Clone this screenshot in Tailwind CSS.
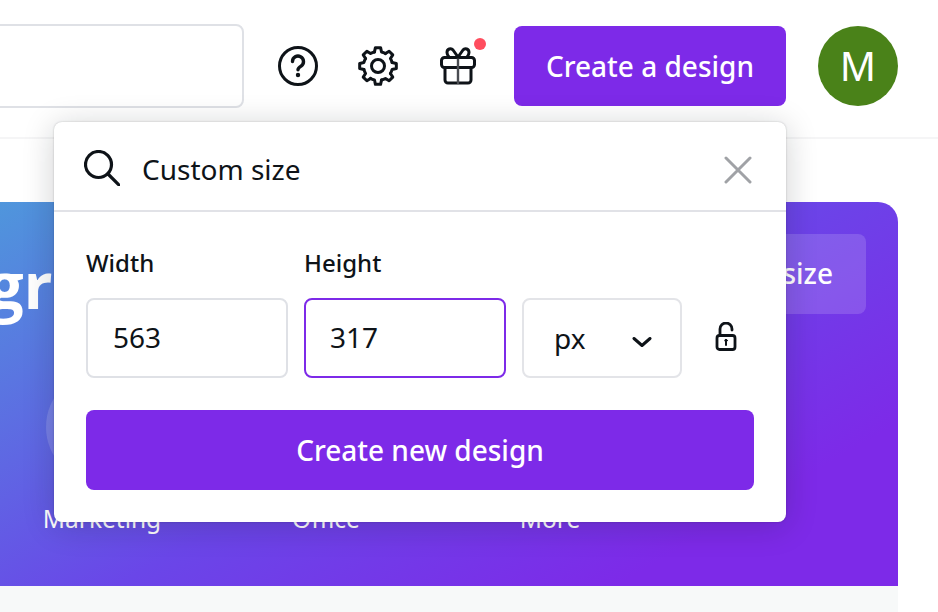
<!DOCTYPE html>
<html lang="en">
<head>
    <meta charset="UTF-8">
    <title>Custom size</title>
    <script src="https://cdn.jsdelivr.net/npm/@tailwindcss/browser@4"></script>
</head>
<body class="bg-white">
    <div class="relative w-[938px] h-[612px] overflow-hidden bg-white flex flex-col font-['Noto_Sans',sans-serif] text-[#0e1318]">

        <!-- top bar -->
        <header class="h-[139px] shrink-0 flex items-start pt-[24px] border-b-2 border-[#f5f5f6]">
            <div class="w-[260px] h-[84px] shrink-0 border-2 border-[#dfe1e6] rounded-lg -ml-[16px]"></div>
            <button class="ml-[34px] mt-[22px] w-10 h-10 shrink-0">
                <svg viewBox="0 0 40 40" class="w-10 h-10" fill="none" stroke="#0e1318" stroke-width="3" stroke-linecap="round">
                    <circle cx="20" cy="20" r="18.5"/>
                    <path d="M14.5 15.5a5.5 5.5 0 1 1 8.6 4.6c-2 1.3-3.1 2-3.1 3.7" stroke-width="3.4"/>
                    <circle cx="20" cy="29" r="1.4" fill="#0e1318" stroke-width="1.6"/>
                </svg>
            </button>
            <button class="ml-10 mt-[22px] w-10 h-10 shrink-0">
                <svg viewBox="0 0 40 40" class="w-10 h-10" fill="none" stroke="#0e1318" stroke-width="3" stroke-linecap="round" stroke-linejoin="round">
                    <path d="M16.49 5.93L17.42 1.68H22.58L23.51 5.93A14.5 14.5 0 0 1 27.47 7.57"/>
                    <path transform="rotate(45 20 20)" d="M16.49 5.93L17.42 1.68H22.58L23.51 5.93A14.5 14.5 0 0 1 27.47 7.57"/>
                    <path transform="rotate(90 20 20)" d="M16.49 5.93L17.42 1.68H22.58L23.51 5.93A14.5 14.5 0 0 1 27.47 7.57"/>
                    <path transform="rotate(135 20 20)" d="M16.49 5.93L17.42 1.68H22.58L23.51 5.93A14.5 14.5 0 0 1 27.47 7.57"/>
                    <path transform="rotate(180 20 20)" d="M16.49 5.93L17.42 1.68H22.58L23.51 5.93A14.5 14.5 0 0 1 27.47 7.57"/>
                    <path transform="rotate(225 20 20)" d="M16.49 5.93L17.42 1.68H22.58L23.51 5.93A14.5 14.5 0 0 1 27.47 7.57"/>
                    <path transform="rotate(270 20 20)" d="M16.49 5.93L17.42 1.68H22.58L23.51 5.93A14.5 14.5 0 0 1 27.47 7.57"/>
                    <path transform="rotate(315 20 20)" d="M16.49 5.93L17.42 1.68H22.58L23.51 5.93A14.5 14.5 0 0 1 27.47 7.57"/>
                    <circle cx="20" cy="20" r="6.5"/>
                </svg>
            </button>
            <button class="relative ml-10 mt-[22px] w-10 h-10 shrink-0">
                <svg viewBox="0 0 40 40" class="w-10 h-10" fill="none" stroke="#0e1318" stroke-width="3" stroke-linecap="round" stroke-linejoin="round">
                    <rect x="3.5" y="11.5" width="33" height="10" rx="3"/>
                    <path d="M7 22V34a3 3 0 0 0 3 3H30a3 3 0 0 0 3-3V22"/>
                    <path d="M20 12V37" stroke="#4a4d52" stroke-width="2.4"/>
                    <path d="M20 11L15 4C13 1.5 9 3 9 6.5C9 8.5 10 10 11 11"/>
                    <path d="M20 11L25 4C27 1.5 31 3 31 6.5C31 8.5 30 10 29 11"/>
                </svg>
                <span class="absolute -top-2 -right-2 w-3 h-3 rounded-full bg-[#ff4d5e]"></span>
            </button>
            <button class="ml-9 mt-[2px] w-[272px] h-20 shrink-0 rounded-lg bg-[#7d2ae8] text-white text-[28px] font-medium">Create a design</button>
            <div class="ml-8 mt-[2px] w-20 h-20 shrink-0 rounded-full bg-[#4a8219] text-white text-[40px] flex items-center justify-center">M</div>
        </header>

        <!-- page body -->
        <main class="flex-1 pt-[63px] w-[898px]">
            <section class="h-[384px] overflow-hidden rounded-tr-[20px] text-white bg-[linear-gradient(150deg,#4f96dc_0%,#6a46e8_50%,#7d2ae8_82%)] pt-8">
                <div class="flex justify-between pr-8 h-20">
                    <h1 class="-ml-[244px] mt-[11px] text-[64px] leading-[80px] font-bold font-['Open_Sans',sans-serif] whitespace-nowrap">Design graphics</h1>
                    <button class="w-[260px] h-20 pb-[2px] rounded-lg bg-white/15 text-[28px] font-medium text-right pr-[33px] whitespace-nowrap">Custom size</button>
                </div>
                <div class="flex -ml-[10px] mt-[57px]">
                    <div class="w-[224px] flex flex-col items-center">
                        <div class="w-28 h-28 rounded-full bg-white/15"></div>
                        <p class="mt-5 text-[24.5px] leading-8">Marketing</p>
                    </div>
                    <div class="w-[224px] flex flex-col items-center">
                        <div class="w-28 h-28 rounded-full bg-white/15"></div>
                        <p class="mt-5 text-[24.5px] leading-8">Office</p>
                    </div>
                    <div class="w-[224px] flex flex-col items-center">
                        <div class="w-28 h-28 rounded-full bg-white/15"></div>
                        <p class="mt-5 text-[24.5px] leading-8">More</p>
                    </div>
                </div>
            </section>
            <div class="h-[26px] bg-[#f7f9f9]"></div>
        </main>

        <!-- custom size popup -->
        <div class="absolute left-[54px] top-[122px] w-[732px] h-[400px] bg-white rounded-lg shadow-[0_0_2px_rgba(14,19,24,0.25),0_4px_32px_rgba(14,19,24,0.2)]">
            <div class="h-[90px] border-b-2 border-[#e1e2e7] flex items-center pl-[30px] pr-[34px]">
                <svg viewBox="0 0 36 36" class="w-9 h-9 shrink-0 mt-[4px]" fill="none" stroke="#0e1318" stroke-width="3.2" stroke-linecap="round">
                    <circle cx="14.5" cy="14.5" r="13"/>
                    <path d="M24 24L35 35"/>
                </svg>
                <span class="ml-[22px] text-[28px] mt-[6px]">Custom size</span>
                <svg viewBox="0 0 28 28" class="w-7 h-7 ml-auto mt-[8px]" fill="none" stroke="#a0a2a6" stroke-width="3" stroke-linecap="round">
                    <path d="M2 2L26 26M26 2L2 26"/>
                </svg>
            </div>
            <div class="px-8 pt-[35px]">
                <div class="flex gap-4">
                    <label class="w-[202px] text-2xl leading-8 font-medium">Width</label>
                    <label class="w-[202px] text-2xl leading-8 font-medium">Height</label>
                </div>
                <div class="flex gap-4 mt-[19px] items-center">
                    <input value="563" class="w-[202px] h-20 pl-[25px] pb-[2px] border-2 border-[#dfe1e6] rounded-lg text-[28px] outline-none">
                    <input value="317" class="w-[202px] h-20 pl-[24px] pb-[2px] border-2 border-[#7d2ae8] rounded-lg text-[28px] outline-none">
                    <div class="w-40 h-20 pl-[30px] pr-[28px] border-2 border-[#e3e4e8] rounded-lg text-[28px] flex items-center justify-between">
                        <span>px</span>
                        <svg viewBox="0 0 20 10" class="w-5 h-[10px] mt-[8px]" fill="none" stroke="#0e1318" stroke-width="3" stroke-linecap="round" stroke-linejoin="round">
                            <path d="M2 1.5L10 8.5L18 1.5"/>
                        </svg>
                    </div>
                    <svg viewBox="0 0 24 32" class="w-6 h-8 ml-4 -mt-[1px]" fill="none" stroke="#0e1318" stroke-width="2.8" stroke-linecap="round" stroke-linejoin="round">
                        <rect x="3" y="13.5" width="18" height="14" rx="2.5"/>
                        <path d="M6 13V7a6 6 0 0 1 12 0V8"/>
                        <circle cx="12" cy="18.5" r="1.2" fill="#0e1318" stroke-width="1"/>
                        <path d="M12 19V23" stroke-width="2"/>
                    </svg>
                </div>
                <button class="w-full h-20 mt-8 rounded-lg bg-[#7d2ae8] text-white text-[28px] font-medium">Create new design</button>
            </div>
        </div>
    </div>
</body>
</html>
